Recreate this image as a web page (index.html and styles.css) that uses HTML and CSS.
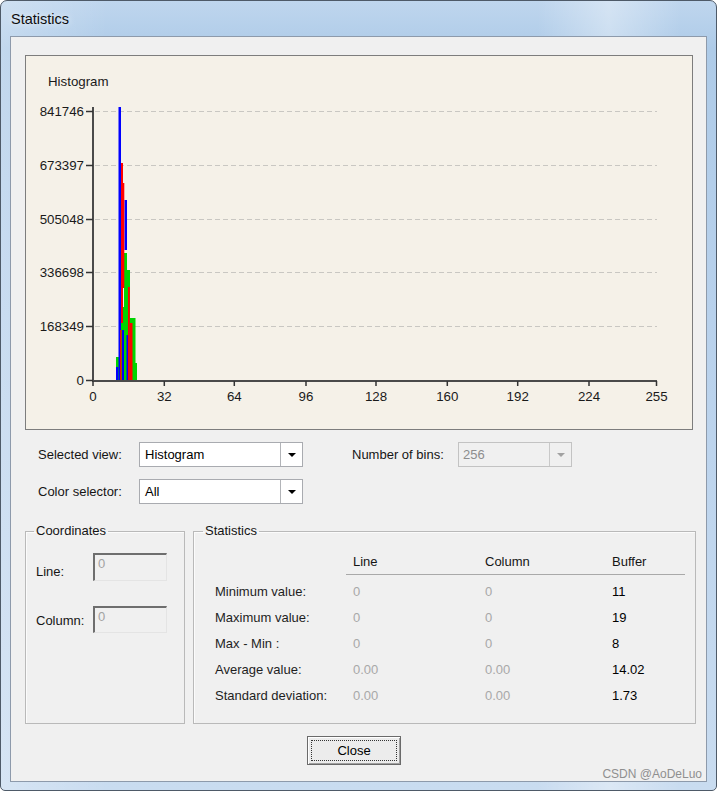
FILE: index.html
```html
<!DOCTYPE html>
<html>
<head>
<meta charset="utf-8">
<title>Statistics</title>
<link rel="stylesheet" href="styles.css">
</head>
<body>
<div class="window">
  <div class="titlebar">Statistics</div>
  <div class="client">
    <div class="chart">
      <svg class="plot" width="666" height="373" viewBox="26 56 666 373">
        <text class="ttl" x="48" y="86">Histogram</text>
        <g class="gridlines">
          <line x1="95" y1="111.5" x2="657" y2="111.5"/>
          <line x1="95" y1="165.5" x2="657" y2="165.5"/>
          <line x1="95" y1="219.5" x2="657" y2="219.5"/>
          <line x1="95" y1="272.5" x2="657" y2="272.5"/>
          <line x1="95" y1="326.5" x2="657" y2="326.5"/>
        </g>
        <g class="ylabels">
          <text x="84" y="116">841746</text>
          <text x="84" y="170">673397</text>
          <text x="84" y="224">505048</text>
          <text x="84" y="277">336698</text>
          <text x="84" y="331">168349</text>
          <text x="84" y="385">0</text>
        </g>
        <g class="green">
          <rect x="116" y="357" width="3" height="24"/>
          <rect x="119" y="307" width="5" height="74"/>
          <rect x="124" y="253" width="3" height="128"/>
          <rect x="127" y="270" width="3" height="111"/>
          <rect x="130" y="318" width="3" height="63"/>
          <rect x="133" y="318" width="2.5" height="63"/>
          <rect x="135" y="363" width="2" height="18"/>
        </g>
        <g class="blue">
          <rect x="116" y="367" width="2.2" height="14"/>
          <rect x="118.5" y="107" width="2.5" height="274"/>
          <rect x="122" y="330" width="2" height="51"/>
          <rect x="124.5" y="200" width="2.5" height="50"/>
          <rect x="126.5" y="335" width="1.5" height="46"/>
        </g>
        <g class="red">
          <rect x="121" y="163" width="2" height="160"/>
          <rect x="122.5" y="183" width="1.8" height="105"/>
          <rect x="120" y="330" width="1.5" height="51"/>
          <rect x="128" y="287" width="1.8" height="94"/>
          <rect x="130" y="323" width="2.5" height="58"/>
        </g>
        <path class="axis" d="M93 107 V381 M92 381 H657"/>
        <path class="ticks" d="M86 111.5 H93 M86 165.5 H93 M86 219.5 H93 M86 272.5 H93 M86 326.5 H93 M86 380.5 H93 M93 381 V386 M164.3 381 V386 M234.3 381 V386 M306 381 V386 M376 381 V386 M447.3 381 V386 M517.7 381 V386 M589 381 V386 M656.5 381 V386"/>
        <g class="xlabels">
          <text x="93" y="400.5">0</text>
          <text x="164.3" y="400.5">32</text>
          <text x="234.3" y="400.5">64</text>
          <text x="306" y="400.5">96</text>
          <text x="376" y="400.5">128</text>
          <text x="447.3" y="400.5">160</text>
          <text x="517.7" y="400.5">192</text>
          <text x="589" y="400.5">224</text>
          <text x="656.5" y="400.5">255</text>
        </g>
      </svg>
    </div>

    <div class="controls">
      <span class="lbl">Selected view:</span>
      <div class="combo"><span class="val">Histogram</span><span class="drop"><i class="arrow"></i></span></div>
      <span></span>
      <span class="lbl">Number of bins:</span>
      <div class="combo disabled"><span class="val">256</span><span class="drop"><i class="arrow"></i></span></div>
      <span class="lbl">Color selector:</span>
      <div class="combo"><span class="val">All</span><span class="drop"><i class="arrow"></i></span></div>
    </div>

    <div class="groups">
      <fieldset class="group coords">
        <legend>Coordinates</legend>
        <div class="coord-grid">
          <span class="lbl lbl-line">Line:</span>
          <div class="sunken tall">0</div>
          <span class="lbl lbl-col">Column:</span>
          <div class="sunken">0</div>
        </div>
      </fieldset>
      <fieldset class="group stats">
        <legend>Statistics</legend>
        <div class="stats-head">
          <span></span>
          <span class="hc">Line</span>
          <span class="hc">Column</span>
          <span class="hc">Buffer</span>
        </div>
        <div class="stats-body">
          <span class="rl">Minimum value:</span><span class="dis">0</span><span class="dis">0</span><span class="v">11</span>
          <span class="rl">Maximum value:</span><span class="dis">0</span><span class="dis">0</span><span class="v">19</span>
          <span class="rl">Max - Min :</span><span class="dis">0</span><span class="dis">0</span><span class="v">8</span>
          <span class="rl">Average value:</span><span class="dis">0.00</span><span class="dis">0.00</span><span class="v">14.02</span>
          <span class="rl">Standard deviation:</span><span class="dis">0.00</span><span class="dis">0.00</span><span class="v">1.73</span>
        </div>
      </fieldset>
    </div>

    <div class="footer">
      <button class="btn-close" type="button">Close</button>
    </div>

    <div class="watermark">CSDN @AoDeLuo</div>
  </div>
</div>
</body>
</html>
```

FILE: styles.css
```css
html, body {
  margin: 0;
  padding: 0;
  background: #ffffff;
}

body {
  font-family: "Liberation Sans", Arial, sans-serif;
  font-size: 13px;
  color: #111;
}

.window {
  position: relative;
  width: 717px;
  height: 791px;
  box-sizing: border-box;
  border: 1px solid #4e5a68;
  border-radius: 7px 7px 5px 5px;
  padding: 0 9px 8px 9px;
  background:
    linear-gradient(to right, rgba(255,255,255,0.25) 0%, rgba(255,255,255,0) 15%, rgba(255,255,255,0) 75%, rgba(255,255,255,0.35) 85%, rgba(255,255,255,0) 95%),
    linear-gradient(to bottom, #bfd6ee 0%, #aecbe8 6%, #b8d1ec 40%, #c9dcf0 100%);
  overflow: hidden;
}

.titlebar {
  height: 35px;
  line-height: 36px;
  padding-left: 1px;
  font-family: "Liberation Sans", Arial, sans-serif;
  font-size: 14.5px;
  color: #0d0d0d;
  text-shadow: 0 0 6px rgba(255,255,255,0.9);
}

.client {
  position: relative;
  height: 746px;
  box-sizing: border-box;
  border: 1px solid #8d9aab;
  background: #f0f0f0;
  padding: 18px 13px 0 14px;
  overflow: hidden;
}

.chart {
  height: 375px;
  box-sizing: border-box;
  border: 1px solid #7d7d7d;
  background: #f5f1e8;
}

.plot {
  display: block;
}

.plot text {
  font-family: "Liberation Sans", Arial, sans-serif;
  font-size: 13.3px;
  fill: #1a1a1a;
}

.plot .ylabels text {
  text-anchor: end;
}

.plot .xlabels text {
  text-anchor: middle;
}

.gridlines line {
  stroke: #c9c7c2;
  stroke-width: 1;
  stroke-dasharray: 5 3;
}

.green rect { fill: #00d400; }
.blue rect { fill: #0000ff; }
.red rect { fill: #ff0000; }

.axis {
  fill: none;
  stroke: #4a4a4a;
  stroke-width: 2;
}

.ticks {
  fill: none;
  stroke: #333;
  stroke-width: 1.5;
}

/* Controls */
.controls {
  display: grid;
  grid-template-columns: 101px 164px 49px 106px 114px;
  grid-auto-rows: 25px;
  row-gap: 12px;
  align-items: center;
  margin-top: 12px;
  padding-left: 13px;
}

.lbl {
  color: #151515;
  white-space: nowrap;
}

.combo {
  display: flex;
  height: 25px;
  box-sizing: border-box;
  border: 1px solid #a9abb0;
  background: #ffffff;
}

.combo .val {
  flex: 1;
  line-height: 23px;
  padding-left: 5px;
  color: #000;
}

.combo .drop {
  width: 21px;
  border-left: 1px solid #b2b4b8;
  display: flex;
  align-items: center;
  justify-content: center;
}

.arrow {
  width: 0;
  height: 0;
  border-left: 4px solid transparent;
  border-right: 4px solid transparent;
  border-top: 4px solid #000;
}

.combo.disabled {
  background: #f0f0f0;
  border-color: #c3c3c3;
}

.combo.disabled .val {
  color: #8d8d8d;
  padding-left: 4px;
}

.combo.disabled .drop {
  border-left-color: #c9c9c9;
}

.combo.disabled .arrow {
  border-top-color: #a2a2a2;
}

/* Group boxes */
.groups {
  display: flex;
  gap: 8px;
  margin-top: 20px;
  margin-right: -3px;
}

.group {
  margin: 0;
  padding: 0;
  height: 200px;
  box-sizing: border-box;
  border: 1px solid #b9b9b9;
  box-shadow: inset 1px 1px 0 #fbfbfb;
  min-width: 0;
}

.group legend {
  margin-left: 8px;
  padding: 0 2px;
  line-height: 14px;
  color: #151515;
}

.coords {
  width: 160px;
  flex: none;
}

.stats {
  flex: 1;
}

.stats legend {
  margin-left: 9px;
}

.coord-grid {
  display: grid;
  grid-template-columns: 57px 74px;
  row-gap: 25px;
  align-items: start;
  padding: 15px 0 0 10px;
}

.lbl-line {
  padding-top: 11px;
}

.lbl-col {
  padding-top: 7px;
}

.sunken {
  height: 27px;
  box-sizing: border-box;
  border-style: solid;
  border-width: 2px 1px 1px 2px;
  border-color: #6e6e6e #e4e4e4 #e4e4e4 #6e6e6e;
  background: #f0f0f0;
  color: #a3a3a3;
  line-height: 16px;
  padding: 1px 0 0 3px;
}

.sunken.tall {
  height: 28px;
}

.stats-head,
.stats-body {
  display: grid;
  grid-template-columns: 131px 132px 127px 80px;
  margin-left: 21px;
}

.stats-head {
  margin-top: 11px;
  height: 26px;
}

.stats-head .hc {
  display: block;
  box-sizing: border-box;
  height: 26px;
  line-height: 25px;
  padding-left: 7px;
  border-bottom: 1px solid #a9a9a9;
  color: #151515;
}

.stats-body {
  margin-top: 4px;
  grid-auto-rows: 26px;
  line-height: 26px;
}

.rl {
  color: #1e1e1e;
  white-space: nowrap;
}

.dis {
  padding-left: 7px;
  color: #a8a8a8;
}

.v {
  padding-left: 7px;
  color: #000;
}

/* Footer */
.footer {
  margin-top: 12px;
  padding-left: 282px;
}

.btn-close {
  display: block;
  width: 94px;
  height: 29px;
  box-sizing: border-box;
  border: 1px solid #6a6a6a;
  background: #ececec;
  box-shadow: inset 1px 1px 0 #ffffff, inset -1px -1px 0 #a0a0a0;
  font-family: "Liberation Sans", Arial, sans-serif;
  font-size: 13px;
  color: #000;
  padding: 0;
  outline: 1px dotted #333;
  outline-offset: -5px;
}

.watermark {
  position: absolute;
  right: 4px;
  bottom: 0;
  font-size: 12px;
  line-height: 13px;
  color: #8f8f8f;
}
```
